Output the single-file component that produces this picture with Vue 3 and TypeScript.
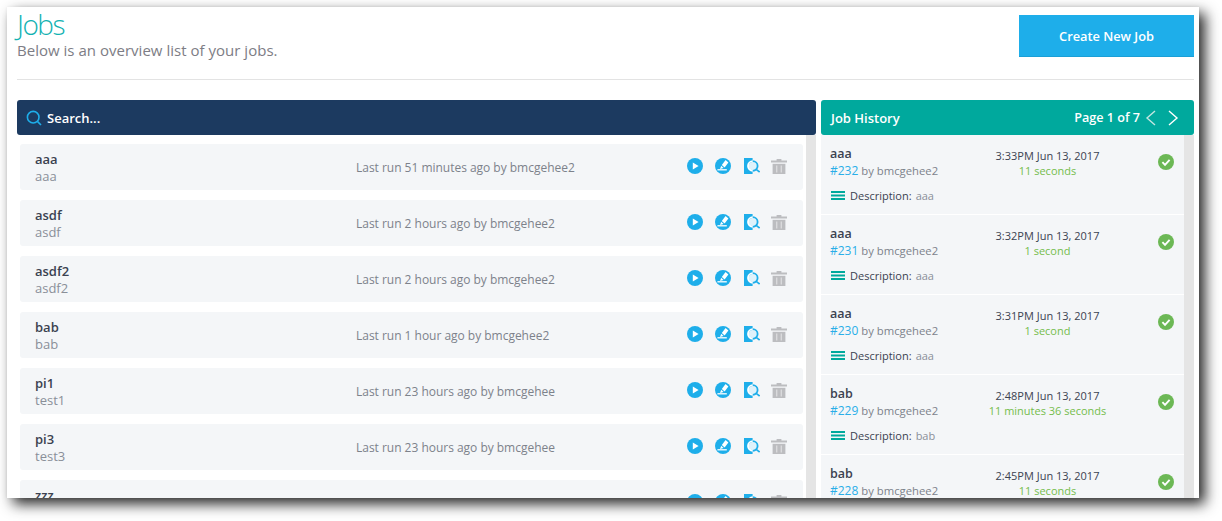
<script setup lang="ts">
interface Job {
  name: string
  desc: string
  lastRun: string
}

interface HistoryItem {
  name: string
  id: number
  user: string
  time: string
  duration: string
  desc: string
}

const jobs: Job[] = [
  { name: 'aaa', desc: 'aaa', lastRun: 'Last run 51 minutes ago by bmcgehee2' },
  { name: 'asdf', desc: 'asdf', lastRun: 'Last run 2 hours ago by bmcgehee2' },
  { name: 'asdf2', desc: 'asdf2', lastRun: 'Last run 2 hours ago by bmcgehee2' },
  { name: 'bab', desc: 'bab', lastRun: 'Last run 1 hour ago by bmcgehee2' },
  { name: 'pi1', desc: 'test1', lastRun: 'Last run 23 hours ago by bmcgehee' },
  { name: 'pi3', desc: 'test3', lastRun: 'Last run 23 hours ago by bmcgehee' },
  { name: 'zzz', desc: 'zzz', lastRun: 'Last run 23 hours ago by bmcgehee' },
]

const history: HistoryItem[] = [
  { name: 'aaa', id: 232, user: 'bmcgehee2', time: '3:33PM Jun 13, 2017', duration: '11 seconds', desc: 'aaa' },
  { name: 'aaa', id: 231, user: 'bmcgehee2', time: '3:32PM Jun 13, 2017', duration: '1 second', desc: 'aaa' },
  { name: 'aaa', id: 230, user: 'bmcgehee2', time: '3:31PM Jun 13, 2017', duration: '1 second', desc: 'aaa' },
  { name: 'bab', id: 229, user: 'bmcgehee2', time: '2:48PM Jun 13, 2017', duration: '11 minutes 36 seconds', desc: 'bab' },
  { name: 'bab', id: 228, user: 'bmcgehee2', time: '2:45PM Jun 13, 2017', duration: '11 seconds', desc: 'bab' },
]
</script>

<template>
  <div class="page">
    <div class="window">
      <header class="head">
        <div>
          <h1>Jobs</h1>
          <p>Below is an overview list of your jobs.</p>
        </div>
        <button class="create">Create New Job</button>
      </header>

      <div class="columns">
        <section class="left">
          <div class="search">
            <svg width="16" height="16" viewBox="0 0 16 16" fill="none" stroke="#1eaeea" stroke-width="1.6">
              <circle cx="7.2" cy="7.2" r="5.8" />
              <path d="M11.4 11.4 15 15" />
            </svg>
            <span>Search...</span>
          </div>
          <div class="list">
            <div class="rows">
              <div v-for="job in jobs" :key="job.name" class="job">
                <div class="job-name">
                  <strong>{{ job.name }}</strong>
                  <span>{{ job.desc }}</span>
                </div>
                <div class="job-run">{{ job.lastRun }}</div>
                <div class="actions">
                  <svg width="16" height="16" viewBox="0 0 16 16">
                    <circle cx="8" cy="8" r="8" fill="#1eaeea" />
                    <path d="M5.8 4.6v6.8L11.6 8z" fill="#fff" />
                  </svg>
                  <svg width="16" height="16" viewBox="0 0 16 16">
                    <circle cx="8" cy="8" r="8" fill="#1eaeea" />
                    <path d="M10.6 2 13.4 4.6 9.6 9.4 6.8 7z" fill="#fff" />
                    <path d="M6.2 7.8 8.6 10 5 11z" fill="#fff" />
                    <path d="M2.4 11.8h9.4" stroke="#fff" stroke-width="1.3" fill="none" />
                  </svg>
                  <svg width="16" height="16" viewBox="0 0 16 16">
                    <rect x="0" y="0" width="8.6" height="16" fill="#1eaeea" />
                    <circle cx="8.8" cy="8" r="4" fill="#dff2fb" />
                    <path d="M8.8 3.2a4.8 4.8 0 0 0 0 9.6" fill="none" stroke="#fff" stroke-width="1.8" />
                    <path d="M8.8 3.2a4.8 4.8 0 0 1 0 9.6" fill="none" stroke="#1eaeea" stroke-width="1.8" />
                    <path d="M12.2 11.4 15.6 14" stroke="#1eaeea" stroke-width="1.6" fill="none" />
                  </svg>
                  <svg width="16" height="16" viewBox="0 0 16 16">
                    <path d="M5.6 1h4.8v1.6H16v2H0v-2h5.6z" fill="#bcbdc0" />
                    <path d="M1.6 5.8h12.8V16H1.6z" fill="#bcbdc0" />
                    <path d="M5 7.4h1.4v7H5zM9.6 7.4H11v7H9.6z" fill="#d9dadc" />
                  </svg>
                </div>
              </div>
            </div>
            <div class="track"></div>
          </div>
        </section>

        <section class="right">
          <div class="history-bar">
            <span>Job History</span>
            <div class="pager">
              <span class="page-label">Page 1 of 7</span>
              <svg width="11" height="16" viewBox="0 0 11 16" fill="none" stroke="#c3e6e1" stroke-width="1.4">
                <path d="M10 1 2 8l8 7" />
              </svg>
              <svg width="11" height="16" viewBox="0 0 11 16" fill="none" stroke="#fff" stroke-width="1.4">
                <path d="M1 1l8 7-8 7" />
              </svg>
            </div>
          </div>
          <div class="list">
            <div class="history">
              <div v-for="item in history" :key="item.id" class="run">
                <div class="run-main">
                  <div class="run-id">
                    <strong>{{ item.name }}</strong>
                    <div class="by"><a>#{{ item.id }}</a> by {{ item.user }}</div>
                  </div>
                  <div class="run-time">
                    <div>{{ item.time }}</div>
                    <div class="duration">{{ item.duration }}</div>
                  </div>
                  <svg class="ok" width="16" height="16" viewBox="0 0 16 16">
                    <circle cx="8" cy="8" r="8" fill="#6cb855" />
                    <path d="M4.4 8.2 7 10.8l4.6-5" fill="none" stroke="#fff" stroke-width="1.9" />
                  </svg>
                </div>
                <div class="run-desc">
                  <svg width="14" height="9" viewBox="0 0 14 9" fill="#00a99d">
                    <rect width="14" height="2" />
                    <rect y="3.5" width="14" height="2" />
                    <rect y="7" width="14" height="2" />
                  </svg>
                  <span class="label">Description:</span>
                  <span class="value">{{ item.desc }}</span>
                </div>
              </div>
            </div>
            <div class="track"></div>
          </div>
        </section>
      </div>
    </div>
  </div>
</template>

<style>
html,
body {
  margin: 0;
  background: #fff;
}
</style>

<style scoped>
.page {
  height: 521px;
  padding: 7px 0 0 7px;
  box-sizing: border-box;
  overflow: hidden;
  font-family: 'Open Sans', sans-serif;
  color: #3b4250;
}

.window {
  width: 1192px;
  height: 491px;
  padding: 0 5px 0 10px;
  box-sizing: border-box;
  background: #fff;
  overflow: hidden;
  box-shadow: 6px 6px 13px rgba(0, 0, 0, 0.85), 0 0 3px rgba(0, 0, 0, 0.05);
}

.head {
  height: 72px;
  display: flex;
  justify-content: space-between;
  align-items: flex-start;
  border-bottom: 1px solid #e3e3e3;
}

h1 {
  margin: 0;
  font-size: 28px;
  font-weight: 300;
  letter-spacing: -1.5px;
  line-height: 35px;
  color: #12b2b2;
}

.head p {
  margin: 0;
  font-size: 15px;
  letter-spacing: 0.02px;
  line-height: 17px;
  color: #7d7d85;
}

.create {
  width: 175px;
  height: 42px;
  margin-top: 8px;
  border: 0;
  border-bottom: 1px solid #1a9fd6;
  background: #1eaeea;
  color: #fff;
  font-family: inherit;
  font-size: 12.8px;
  font-weight: 600;
}

.columns {
  display: flex;
  gap: 5px;
  margin-top: 20px;
}

.left {
  width: 799px;
}

.right {
  width: 373px;
}

.search,
.history-bar {
  height: 35px;
  display: flex;
  align-items: center;
  border-radius: 3px;
  color: #fff;
  font-size: 13px;
  font-weight: 600;
}

.search {
  gap: 5px;
  padding-left: 9px;
  background: #1c3a60;
}

.history-bar {
  justify-content: space-between;
  padding: 0 15px 0 10px;
  background: #00a99d;
}

.pager {
  display: flex;
  align-items: center;
  gap: 5px;
}

.page-label {
  font-size: 12.6px;
}

.pager svg + svg {
  margin-left: 7px;
}

.list {
  display: flex;
  height: 400px;
  overflow: hidden;
}

.track {
  flex: none;
  width: 10px;
  background: #e5e5e5;
}

.rows {
  flex: 1;
  padding: 9px 3px 0;
}

.job {
  height: 46px;
  margin-bottom: 10px;
  display: flex;
  align-items: center;
  background: #f4f6f8;
  border-radius: 3px;
  font-size: 13px;
}

.job-name {
  width: 336px;
  padding: 2px 0 0 15px;
  box-sizing: border-box;
  display: flex;
  flex-direction: column;
  line-height: 17px;
}

.job-name strong {
  font-weight: 600;
}

.job-name span {
  color: #8a8f98;
}

.job-run {
  flex: 1;
  font-size: 12px;
  letter-spacing: -0.02px;
  color: #7d828b;
}

.actions {
  display: flex;
  gap: 12px;
  margin: 0 16px 2px 0;
}

.actions svg:nth-child(3) {
  margin: 0 -1px 0 1px;
}

.history {
  flex: 1;
  background: #f4f6f8;
}

.run {
  height: 80px;
  padding: 10px 10px 0 9px;
  box-sizing: border-box;
  border-bottom: 1px solid #fff;
}

.run-main {
  display: flex;
  align-items: flex-start;
}

.run-id {
  width: 135px;
  flex: none;
  font-size: 12px;
  line-height: 17px;
}

.run-id strong {
  font-weight: 600;
  font-size: 12.5px;
}

.by {
  font-size: 11.3px;
  color: #7d828b;
}

.by a {
  font-size: 12px;
  color: #29aee8;
}

.run-time {
  width: 165px;
  flex: none;
  margin-top: 3px;
  text-align: center;
  font-size: 11px;
  line-height: 15px;
}

.duration {
  color: #74bd4c;
}

.ok {
  flex: none;
  margin: 9px 0 0 28px;
}

.run-desc {
  display: flex;
  align-items: center;
  margin: 9px 0 0 1px;
  font-size: 11px;
  line-height: 15px;
}

.label {
  margin-left: 5px;
}

.value {
  margin-left: 4px;
  color: #8a8f98;
}
</style>
